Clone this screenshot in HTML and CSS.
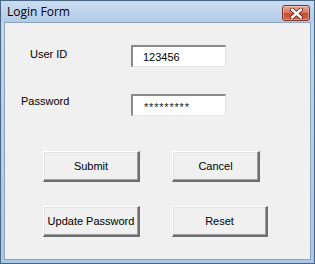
FILE: index.html
```html
<!DOCTYPE html>
<html lang="en">
<head>
  <meta charset="UTF-8" />
  <title>Login Form</title>
  <link rel="stylesheet" href="styles.css">
</head>
<body>
  <!-- Window -->
  <div class="window">
    <div class="titlebar">
      <span class="title">Login Form</span>
      <button class="close-btn" aria-label="Close">
        <svg width="13" height="11" viewBox="0 0 13 11">
          <path d="M2 1.5 L11 9.5 M11 1.5 L2 9.5" stroke="#5a1a12" stroke-width="4" stroke-linecap="round"/>
          <path d="M2 1.5 L11 9.5 M11 1.5 L2 9.5" stroke="#fff" stroke-width="2.4" stroke-linecap="round"/>
        </svg>
      </button>
    </div>

    <div class="client">
      <!-- Fields -->
      <div class="row row-user">
        <label class="label label-user">User ID</label>
        <input class="textbox" type="text" value="123456" readonly>
      </div>
      <div class="row row-pass">
        <label class="label label-pass">Password</label>
        <input class="textbox stars" type="text" value="*********" readonly>
      </div>

      <!-- Buttons -->
      <div class="btn-row btn-row-1">
        <button class="btn btn-submit">Submit</button>
        <button class="btn btn-cancel">Cancel</button>
      </div>
      <div class="btn-row btn-row-2">
        <button class="btn btn-update">Update Password</button>
        <button class="btn btn-reset">Reset</button>
      </div>
    </div>
  </div>
</body>
</html>
```

FILE: styles.css
```css
/* ===== Reset ===== */
* {
  margin: 0;
  padding: 0;
  box-sizing: border-box;
}
body {
  width: 315px;
  height: 264px;
  overflow: hidden;
  font-family: 'Liberation Sans', Arial, sans-serif;
  font-size: 11px;
  color: #000;
}

/* ===== Window frame ===== */
.window {
  width: 315px;
  height: 264px;
  display: flex;
  flex-direction: column;
  border: 1px solid #4a6582;
  background: linear-gradient(#c3d8ef, #a9c7e6);
}
.titlebar {
  height: 21px;
  display: flex;
  align-items: center;
  justify-content: space-between;
  padding-left: 6px;
  background: linear-gradient(#c9dcf1, #b4cbe6);
}
.title {
  font-family: 'Open Sans', 'Noto Sans', sans-serif;
  font-size: 12px;
  color: #000;
  margin-top: -1px;
}
.close-btn {
  width: 28px;
  height: 16px;
  margin-right: 4px;
  margin-top: 3px;
  border: 1px solid #7b3226;
  border-radius: 3px;
  background: linear-gradient(#e8a593 0%, #d87a64 45%, #c44b30 55%, #d2684d 100%);
  display: flex;
  align-items: center;
  justify-content: center;
  box-shadow: inset 0 0 0 1px rgba(255,255,255,0.35);
}

/* ===== Client area ===== */
.client {
  flex: 1;
  margin: 0 3px 3px 3px;
  background: #f0f0f0;
  border: 1px solid #8ba3bd;
}

/* ===== Fields ===== */
.row {
  display: flex;
  align-items: flex-start;
}
.row-user { margin-top: 22px; }
.row-pass { margin-top: 27px; }
.label {
  width: 126px;
  line-height: 13px;
}
.label-user { padding-left: 25px; margin-top: 3px; }
.label-pass { padding-left: 16px; margin-top: 1px; }
.textbox {
  width: 95px;
  height: 22px;
  padding-left: 10px;
  font-family: 'Liberation Sans', Arial, sans-serif;
  font-size: 11px;
  color: #000;
  background: #fff;
  border-style: solid;
  border-width: 2px 1px 1px 2px;
  border-color: #8a8a8a #e3e3e3 #e3e3e3 #8a8a8a;
  outline: none;
}
.stars {
  padding-left: 11px;
  padding-top: 3px;
  letter-spacing: 0.8px;
  color: #222;
}

/* ===== Buttons ===== */
.btn-row {
  display: flex;
  gap: 32px;
  padding-left: 38px;
}
.btn-row-1 { margin-top: 35px; }
.btn-row-2 { margin-top: 24px; }
.btn {
  height: 31px;
  font-family: 'Liberation Sans', Arial, sans-serif;
  font-size: 11px;
  color: #000;
  background: #f0f0f0;
  border-style: solid;
  border-width: 1px 2px 2px 1px;
  border-color: #ffffff #6e6e6e #6e6e6e #ffffff;
  box-shadow: inset -1px -1px 0 #a0a0a0, inset 1px 1px 0 #e3e3e3;
}
.btn-submit, .btn-update { width: 97px; }
.btn-cancel { width: 88px; }
.btn-reset { width: 96px; }
```
